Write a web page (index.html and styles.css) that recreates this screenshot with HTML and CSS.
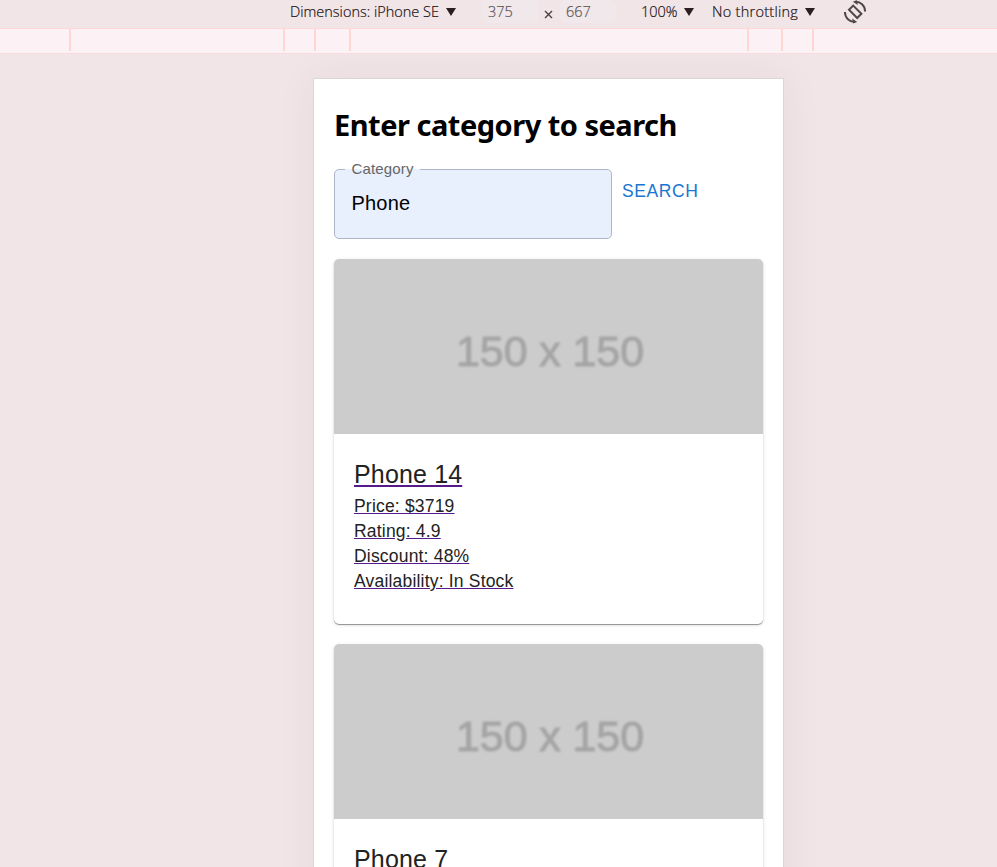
FILE: index.html
```html
<!DOCTYPE html>
<html lang="en">
<head>
<meta charset="utf-8">
<title>Category search</title>
<link rel="stylesheet" href="styles.css">
</head>
<body>
<header class="toolbar">
  <div class="device"><span>Dimensions: iPhone SE</span><i class="caret"></i></div>
  <div class="size size-w">375</div>
  <svg class="times" width="9" height="9" viewBox="0 0 9 9"><path d="M1 1l7 7M8 1L1 8" stroke="#4b4143" stroke-width="1.4"/></svg>
  <div class="size size-h">667</div>
  <div class="zoom"><span>100%</span><i class="caret"></i></div>
  <div class="throttle"><span>No throttling</span><i class="caret"></i></div>
  <svg class="rotate" width="24" height="24" viewBox="0 0 24 24" fill="none" stroke="#51474a" stroke-width="2">
    <path d="M10.2 5.6l8.2 8.2-4.2 4.2-8.2-8.2z"/>
    <path d="M12 1.8C17.5 1.3 22 5.8 22.1 11.5M12 21.8C6.5 22.3 2 17.8 1.9 12.1"/>
    <path d="M9.8 1.8L14 .2l.8 4.9zM14.2 21.9L10 23.5l-.8-4.9z" fill="#51474a" stroke="none"/>
  </svg>
</header>
<div class="ruler"><i class="seg a"></i><i class="seg b"></i><i class="seg c"></i><i class="seg d"></i><i class="seg e"></i><i class="seg f"></i><i class="seg c"></i></div>
<main class="stage">
  <section class="screen">
    <h1>Enter category to search</h1>
    <form class="search">
      <div class="field">
        <label>Category</label>
        <div class="value">Phone</div>
      </div>
      <div class="button">SEARCH</div>
    </form>
    <article class="card">
      <div class="media"><span>150 x 150</span></div>
      <div class="content">
        <h2><a>Phone 14</a></h2>
        <p><a>Price: $3719</a></p>
        <p><a>Rating: 4.9</a></p>
        <p><a>Discount: 48%</a></p>
        <p><a>Availability: In Stock</a></p>
      </div>
    </article>
    <article class="card">
      <div class="media"><span>150 x 150</span></div>
      <div class="content">
        <h2><a>Phone 7</a></h2>
      </div>
    </article>
  </section>
</main>
</body>
</html>
```
FILE: styles.css
```css
* { box-sizing: border-box; }
body { margin: 0; height: 867px; overflow: hidden; display: flex; flex-direction: column; background: #f1e5e7; font-family: "Liberation Sans", Arial, sans-serif; }
.toolbar { flex: none; height: 28px; display: flex; align-items: flex-start; padding-left: 290px; font: 300 14.5px/24px "Open Sans", "Noto Sans", sans-serif; color: #1c1214; -webkit-text-stroke: .2px; white-space: nowrap; }
.device, .zoom, .throttle { display: flex; justify-content: space-between; }
.device { width: 166px; }
.zoom { width: 53px; margin-left: 25px; }
.throttle { width: 103px; margin-left: 18px; letter-spacing: .27px; }
.caret { width: 10px; height: 8px; margin-top: 8px; background: #2b1d20; clip-path: polygon(0 0, 100% 0, 50% 100%); }
.size { height: 23px; border-radius: 6px; background: #f0e8ea; color: #5c5254; padding-left: 6px; }
.size-w { width: 57px; margin-left: 26px; }
.size-h { width: 56px; margin-left: 7px; }
.times { margin: 10px 0 0 5px; }
.rotate { margin: 0 0 0 28px; }
.ruler { flex: none; height: 26px; display: flex; background: #fcf1f4; border-top: 1px solid #ffd8d6; border-bottom: 1px solid #fbdcdc; }
.seg { height: 22px; border-right: 2px solid #ffd6d3; }
.a { width: 71px; }
.b { width: 214px; }
.c { width: 31px; }
.d { width: 35px; }
.e { width: 398px; }
.f { width: 34px; }
.stage { flex: 1; min-height: 0; padding: 24px 0 0 313px; overflow: hidden; }
.screen { width: 471px; height: 900px; padding: 25px 20px 0; border: 1px solid #dcd6d8; background: #fff; box-shadow: 0 0 40px rgba(90, 50, 60, .06); }
h1 { margin: 0; height: 65px; font: 700 29px/42px "Noto Sans", "Open Sans", sans-serif; letter-spacing: -.5px; white-space: nowrap; color: #000; }
.search { display: flex; height: 90px; }
.field { position: relative; width: 278px; height: 70px; padding: 19px 0 0 16.5px; border: 1px solid #aeb6c6; border-radius: 5px; background: #e8effd; }
.field label { position: absolute; top: -12px; left: 10px; height: 22px; padding: 0 6px 0 6.5px; font-size: 15px; line-height: 22px; letter-spacing: .15px; color: #666; background: linear-gradient(#fff 11px, #e8effd 11px); }
.value { font-size: 20px; line-height: 29px; letter-spacing: .2px; color: #000; }
.button { margin-left: 10px; font-size: 17.5px; line-height: 44px; letter-spacing: .6px; color: #1976d2; }
.card { margin-bottom: 20px; height: 365px; border-radius: 5px; background: #fff; overflow: hidden; box-shadow: 0 1px 1px rgba(0, 0, 0, .4), 0 1px 4px rgba(0, 0, 0, .1); }
.media { height: 175px; background: #ccc; text-align: center; }
.media span { position: relative; left: 1.5px; font-size: 43px; line-height: 184px; letter-spacing: -.1px; color: #a5a5a5; -webkit-text-stroke: 1px #a5a5a5; filter: blur(.9px); }
.content { padding: 20px; }
h2 { margin: 0 0 7px; font-size: 25px; font-weight: 400; line-height: 40px; height: 33px; letter-spacing: .15px; color: #222; }
p { margin: 0; font-size: 17.5px; line-height: 25px; color: #222; letter-spacing: .19px; }
.content a { text-decoration: underline; text-decoration-color: #551a8b; }
```
